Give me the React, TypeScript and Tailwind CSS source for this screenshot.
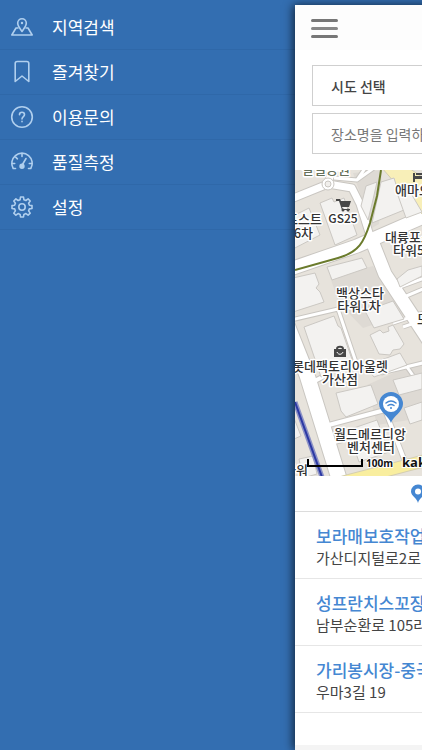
import type { ReactNode } from "react";

const iconProps = {
  width: 24,
  height: 24,
  viewBox: "0 0 24 24",
  fill: "none",
  stroke: "currentColor",
  strokeWidth: 1.6,
  strokeLinecap: "round" as const,
  strokeLinejoin: "round" as const,
  "aria-hidden": true,
};

const RegionIcon = () => (
  <svg {...iconProps}>
    <path d="M12 16.5C10 13.5 7.7 11 7.7 8a4.3 4.3 0 0 1 8.6 0c0 3-2.300 5.500-4.300 8.500Z" />
    <circle cx="12" cy="8" r="1.200" fill="currentColor" stroke="none" />
    <path d="M8 13H6L1.800 20h20.400L18 13H16" />
  </svg>
);

const BookmarkIcon = () => (
  <svg {...iconProps}>
    <path d="M5.200 21.500V3.500a2 2 0 0 1 2-2h9.600a2 2 0 0 1 2 2v18L12 16Z" />
  </svg>
);

const QuestionIcon = () => (
  <svg {...iconProps}>
    <circle cx="12" cy="12" r="10.300" />
    <path d="M9.500 9.700c0-3.200 5-3.200 5 0 0 2-2.500 1.900-2.500 4.300M12 16.300v.4" />
  </svg>
);

const GaugeIcon = () => (
  <svg {...iconProps}>
    <path d="M5.500 18.500H3.200a10.200 10.200 0 1 1 17.600 0h-2.300" />
    <path d="M12 4v2.500M5.700 7.200l1.700 1.600M2 13.500h2.700M19.300 13.500H22M12.500 14.500l3.500-6" />
    <circle cx="12" cy="16.200" r="1.900" fill="currentColor" />
  </svg>
);

const GearIcon = () => (
  <svg {...iconProps}>
    <path d="M10.100 4.700 10.500 2h3l.4 2.700 2 .8 2.200-1.600 2.100 2.100-1.600 2.200.8 2 2.600.4v2.900l-2.600.4-.8 2 1.600 2.200-2.100 2.100-2.200-1.600-2 .8-.4 2.600h-3l-.4-2.600-2-.8-2.200 1.600-2.100-2.100 1.600-2.200-.8-2L2 13.500v-2.900l2.600-.4.8-2L3.800 6l2.100-2.100 2.200 1.600Z" />
    <circle cx="12" cy="12" r="3.200" />
  </svg>
);

const menu: { label: string; icon: ReactNode }[] = [
  { label: "지역검색", icon: <RegionIcon /> },
  { label: "즐겨찾기", icon: <BookmarkIcon /> },
  { label: "이용문의", icon: <QuestionIcon /> },
  { label: "품질측정", icon: <GaugeIcon /> },
  { label: "설정", icon: <GearIcon /> },
];

const places = [
  { name: "보라매보호작업장", address: "가산디지털로2로 43" },
  { name: "성프란치스꼬장애인복지관", address: "남부순환로 105라길" },
  { name: "가리봉시장-중국동포타운", address: "우마3길 19" },
];

const AreaMap = () => (
  <svg
    className="block h-[306px] w-full"
    viewBox="0 0 422 306"
    preserveAspectRatio="xMinYMin slice"
    role="img"
    aria-label="지도"
  >
    <rect width="422" height="306" fill="#e7e3dc" />

    <g fill="#dedad4">
      <path d="M58 3 87 0 84 54 77 58Z" />
      <path d="M35 107 78 96 109 145 68 158 44 133Z" />
      <path d="M72 215 127 190 127 248 82 255Z" />
    </g>

    <g fill="none" strokeLinejoin="round" stroke="#c9c6c1">
      <path d="M-4 29 33 14 38 -4M33 14 57 18 65 34 76 69 90 105 138 177" strokeWidth="9" />
      <path d="M39 8 62 10 83 -5M62 10 73 -6" strokeWidth="5" />
      <path d="M-5 99 62 76 140 42" strokeWidth="15" />
      <path d="M75 66 90 104 138 177" strokeWidth="15" />
      <path d="M102 118 140 104M109 127 140 114M98 153 140 139M108 157 140 146" strokeWidth="5" />
      <path d="M-4 150 43 139 64 201" strokeWidth="5" />
      <path d="M-8 155 12 205 46 315" strokeWidth="17" />
      <path d="M14 214 35 203M30 256 90 240 109 289M35 273 47 270" strokeWidth="6" />
      <path d="M86 203 140 190M112 197 119 207" strokeWidth="5" />
    </g>
    <g fill="none" strokeLinejoin="round" stroke="#ffffff">
      <path d="M-4 29 33 14 38 -4M33 14 57 18 65 34 76 69 90 105 138 177" strokeWidth="7" />
      <path d="M39 8 62 10 83 -5M62 10 73 -6" strokeWidth="3" />
      <path d="M-5 99 62 76 140 42" strokeWidth="13" />
      <path d="M75 66 90 104 138 177" strokeWidth="13" />
      <path d="M102 118 140 104M109 127 140 114M98 153 140 139M108 157 140 146" strokeWidth="3" />
      <path d="M-4 150 43 139 64 201" strokeWidth="3" />
      <path d="M-8 155 12 205 46 315" strokeWidth="15" />
      <path d="M14 214 35 203M30 256 90 240 109 289M35 273 47 270" strokeWidth="4" />
      <path d="M86 203 140 190M112 197 119 207" strokeWidth="3" />
    </g>
    <circle cx="33" cy="14" r="6" fill="#ffffff" stroke="#c9c6c1" />
    <circle cx="33" cy="14" r="3" fill="#f1efec" stroke="#c9c6c1" />

    <path d="M87 -2 134 52 134 12 114 -2Z" fill="#f8efb8" stroke="#d4ceb0" />
    <path d="M48 312 140 288" stroke="#d4ceb0" strokeWidth="13" />
    <path d="M48 312 140 288" stroke="#f9ee9f" strokeWidth="11" />

    <g fill="#f3f2f0" stroke="#cbc8c3">
      <path d="M-2 46 14 38 25 65 -2 79Z" />
      <path d="M25 33 37 28 39 32 49 28 62 65 40 75Z" />
      <path d="M71 16 82 12 77 34 73 50 66 36ZM86 12 99 8 109 40 77 53Z" />
      <path d="M101 20 111 15 127 42 111 48Z" />
      <path d="M32 97 67 88 72 98 37 110Z" />
      <path d="M-2 108 20 103 24 114 21 118 25 122 29 132 -2 142Z" />
      <path d="M9 157 39 146 43 156 46 158 59 195 26 207Z" />
      <path d="M70 141 98 131 109 149 79 158Z" />
      <path d="M75 165 85 160 88 163 94 161 93 157 98 155 109 174 105 179 98 180 95 185 84 184Z" />
      <path d="M70 196 105 183 112 195 79 207Z" />
      <path d="M41 223 76 215 83 234 51 247 46 241Z" />
      <path d="M98 210 127 203 127 219 104 225Z" />
      <path d="M109 238 127 232 127 250 115 254Z" />
      <path d="M53 260 82 250 94 282 64 292Z" />
      <path d="M-1 248 6 266 -1 269ZM4 289 18 286 22 304 8 308Z" />
      <path d="M102 109 113 100 127 96 127 106 105 117Z" />
    </g>

    <path d="M0 100 43 88C64 82 69 72 75 53L82 26 86 0" fill="none" stroke="#6b7b2c" strokeWidth="2" />
    <path d="M0 232 27 307" stroke="#8b91c6" strokeWidth="5" />
    <path d="M0 232 27 307" stroke="#2c39a4" strokeWidth="2" />

    <path d="M41 29h4l1 2h10l-2 6h-7l1 2h7v1h-8l-3-9h-3Z" fill="#484848" />
    <g fill="#484848">
      <circle cx="48" cy="40" r="1.500" />
      <circle cx="53" cy="40" r="1.500" />
      <path d="M39 179h12v8H39Z" />
      <path d="M118 3h2v3h9v6h-2V9h-7v3h-2Z" />
      <path d="M121 3h8v2h-8Z" />
    </g>
    <path d="M42 179c0-3 6-3 6 0" fill="none" stroke="#484848" strokeWidth="2" />
    <path d="M42 182c1 3 5 3 6 0" fill="none" stroke="#ffffff" />

    <g
      fill="#333333"
      stroke="#ffffff"
      strokeWidth="3"
      strokeLinejoin="round"
      paintOrder="stroke"
      textAnchor="middle"
      fontSize="13"
      fontWeight="500"
    >
      <text x="31" y="4" fill="#65705b">갈릴공원</text>
      <text x="48" y="53" fontSize="12">GS25</text>
      <text x="27" y="54" textAnchor="end">포스트</text>
      <text x="18" y="68" textAnchor="end">6차</text>
      <text x="100" y="25" textAnchor="start">애마오빌딩</text>
      <text x="90" y="72" textAnchor="start">대륭포스트</text>
      <text x="98" y="85" textAnchor="start">타워5차</text>
      <text x="65" y="128">백상스타</text>
      <text x="64" y="141">타워1차</text>
      <text x="122" y="154" textAnchor="start">모비우스</text>
      <text x="45" y="201">롯데팩토리아울렛</text>
      <text x="45" y="214">가산점</text>
      <text x="75" y="269">월드메르디앙</text>
      <text x="76" y="282">벤처센터</text>
      <text x="13" y="305" textAnchor="end">타워</text>
    </g>

    <path d="M96 253C94 246 84 242 84 234a12 12 0 0 1 24 0c0 8-10 12-12 19Z" fill="#4587d2" />
    <circle cx="96" cy="234" r="8" fill="#ffffff" />
    <g fill="none" stroke="#4587d2" strokeWidth="1.500" strokeLinecap="round">
      <path d="M91 233q5-4 10 0M93 235.500q3-2 6 0" />
    </g>
    <circle cx="96" cy="238" r="1" fill="#4587d2" />

    <path d="M13 289v7h54v-7" fill="none" stroke="#000000" strokeWidth="2" />
    <g fill="#111111" fontWeight="700" stroke="#ffffff" strokeWidth="2" paintOrder="stroke">
      <text x="71" y="297" fontSize="10" fontFamily="Open Sans, sans-serif">100m</text>
      <text x="107" y="297" fontSize="13" fontFamily="Open Sans, sans-serif">kakao</text>
    </g>
  </svg>
);

export default function App() {
  return (
    <div className="flex h-screen overflow-hidden bg-[#336eb1] pt-[5px] font-['Noto_Sans_CJK_KR',sans-serif]">
      <nav className="w-[295px] shrink-0" aria-label="메뉴">
        <ul>
          {menu.map(({ label, icon }) => (
            <li key={label} className="border-b border-[#2f68a9]">
              <a href="#" className="flex h-11 items-center gap-[18px] pl-[10px] text-[17px] text-white">
                <span className="text-[#b0cfee]">{icon}</span>
                {label}
              </a>
            </li>
          ))}
        </ul>
      </nav>

      <main className="flex w-full shrink-0 flex-col bg-white shadow-[-2px_0_9px_rgba(0,0,0,0.65)]">
        <header className="flex h-[45px] shrink-0 items-center bg-[#fdfdfd] px-4 pt-[2px]">
          <button type="button" aria-label="메뉴 닫기" className="flex w-[27px] flex-col gap-[5px]">
            <span className="h-[3px] w-full rounded-sm bg-[#777777]" />
            <span className="h-[3px] w-full rounded-sm bg-[#888888]" />
            <span className="h-[3px] w-full rounded-sm bg-[#777777]" />
          </button>
        </header>

        <form className="flex shrink-0 flex-col gap-[7px] px-[17px] pt-[15px] pb-4">
          <select
            aria-label="시도 선택"
            className="h-[41px] w-full appearance-none border border-[#cfcfcf] bg-white px-[18px] text-sm font-medium text-[#444444]"
          >
            <option>시도 선택</option>
          </select>
          <input
            type="search"
            aria-label="장소명"
            placeholder="장소명을 입력하세요"
            className="h-[41px] w-full appearance-none border border-[#cfcfcf] bg-white px-[18px] text-sm placeholder:text-[#777777]"
          />
        </form>

        <div className="shrink-0">
          <AreaMap />
        </div>

        <div className="flex h-9 shrink-0 items-center border-b border-[#dcdcdc] pl-[115px] text-sm text-[#555555]">
          <svg width="16" height="19" viewBox="0 0 16 19" aria-hidden="true">
            <path d="M8 19C7 14 1 12 1 7.500a7 7 0 0 1 14 0C15 12 9 14 8 19Z" fill="#4587d2" />
            <circle cx="8" cy="7.500" r="3" fill="#ffffff" />
          </svg>
          <span className="pl-2">공공와이파이</span>
        </div>

        <ul className="shrink-0">
          {places.map(({ name, address }) => (
            <li key={name} className="border-b border-[#e6e6e6] px-[21px] pt-3 pb-[10px]">
              <a href="#" className="block text-[17px] leading-6 font-medium text-[#4587d2]">
                {name}
              </a>
              <p className="text-[15px] leading-5 text-[#444444]">{address}</p>
            </li>
          ))}
        </ul>

        <div className="h-8 shrink-0" />
        <footer className="grow bg-[#f4f4f4]" />
      </main>
    </div>
  );
}
